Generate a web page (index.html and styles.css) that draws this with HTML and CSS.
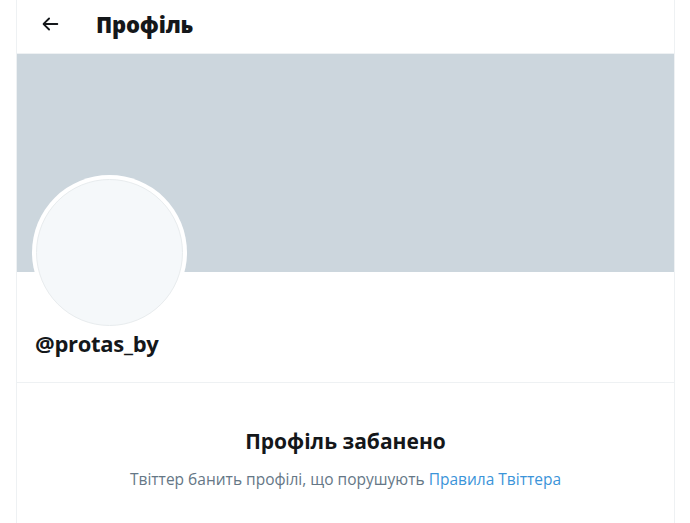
FILE: index.html
```html
<!DOCTYPE html>
<html lang="uk">
<head>
<meta charset="utf-8">
<link rel="stylesheet" href="styles.css">
</head>
<body>
<div class="column">
  <header class="header">
    <span class="back">
      <svg viewBox="0 0 24 24" width="22" height="22"><path d="M20 11H7.414l4.293-4.293a1 1 0 0 0-1.414-1.414l-6 6a1 1 0 0 0 0 1.414l6 6a1 1 0 0 0 1.414-1.414L7.414 13H20a1 1 0 0 0 0-2z" fill="#14171a"/></svg>
    </span>
    <h1 class="title">Профіль</h1>
  </header>
  <div class="banner"></div>
  <div class="profile">
    <div class="avatar"><div class="avatar-inner"></div></div>
    <div class="handle">@protas_by</div>
  </div>
  <section class="banned">
    <h2 class="banned-title">Профіль забанено</h2>
    <p class="banned-text">Твіттер банить профілі, що порушують <a class="link" href="#">Правила Твіттера</a></p>
  </section>
</div>
</body>
</html>
```
FILE: styles.css
```css
* { box-sizing: border-box; }
html, body { margin: 0; padding: 0; background: #fff; }
body { font-family: "Open Sans", "Noto Sans", sans-serif; color: #14171a; }
.column {
  margin-left: 16px;
  width: 659px;
  min-height: 523px;
  border-left: 1px solid #eef1f3;
  border-right: 1px solid #eef1f3;
}
.header {
  height: 54px;
  display: flex;
  align-items: center;
  padding-left: 22px;
  border-bottom: 1px solid #eef1f3;
}
.back { display: flex; width: 22px; height: 22px; margin-top: -6px; }
.title {
  margin: -5px 0 0 35px;
  font-size: 22px;
  font-weight: 800;
  letter-spacing: -0.2px;
}
.banner { height: 218px; background: #ccd6dd; }
.profile {
  display: flex;
  flex-direction: column;
  padding: 0 15px;
  height: 111px;
  border-bottom: 1px solid #eef1f3;
}
.avatar {
  width: 155px;
  height: 155px;
  flex: none;
  margin-top: -97px;
  border-radius: 50%;
  background: #fff;
  padding: 4px;
}
.avatar-inner {
  width: 100%;
  height: 100%;
  border-radius: 50%;
  background: #f5f8fa;
  border: 1px solid #e8ecee;
}
.handle {
  margin: -2px 0 0 3px;
  font-size: 22px;
  font-weight: 700;
  line-height: 30px;
  letter-spacing: -0.3px;
}
.banned { text-align: center; padding-top: 44px; }
.banned-title { margin: 0; font-size: 21px; font-weight: 700; line-height: 28px; }
.banned-text { margin: 14px 0 0; font-size: 15.5px; color: #657786; line-height: 20px; }
.link { color: #3b94d9; text-decoration: none; }
```
